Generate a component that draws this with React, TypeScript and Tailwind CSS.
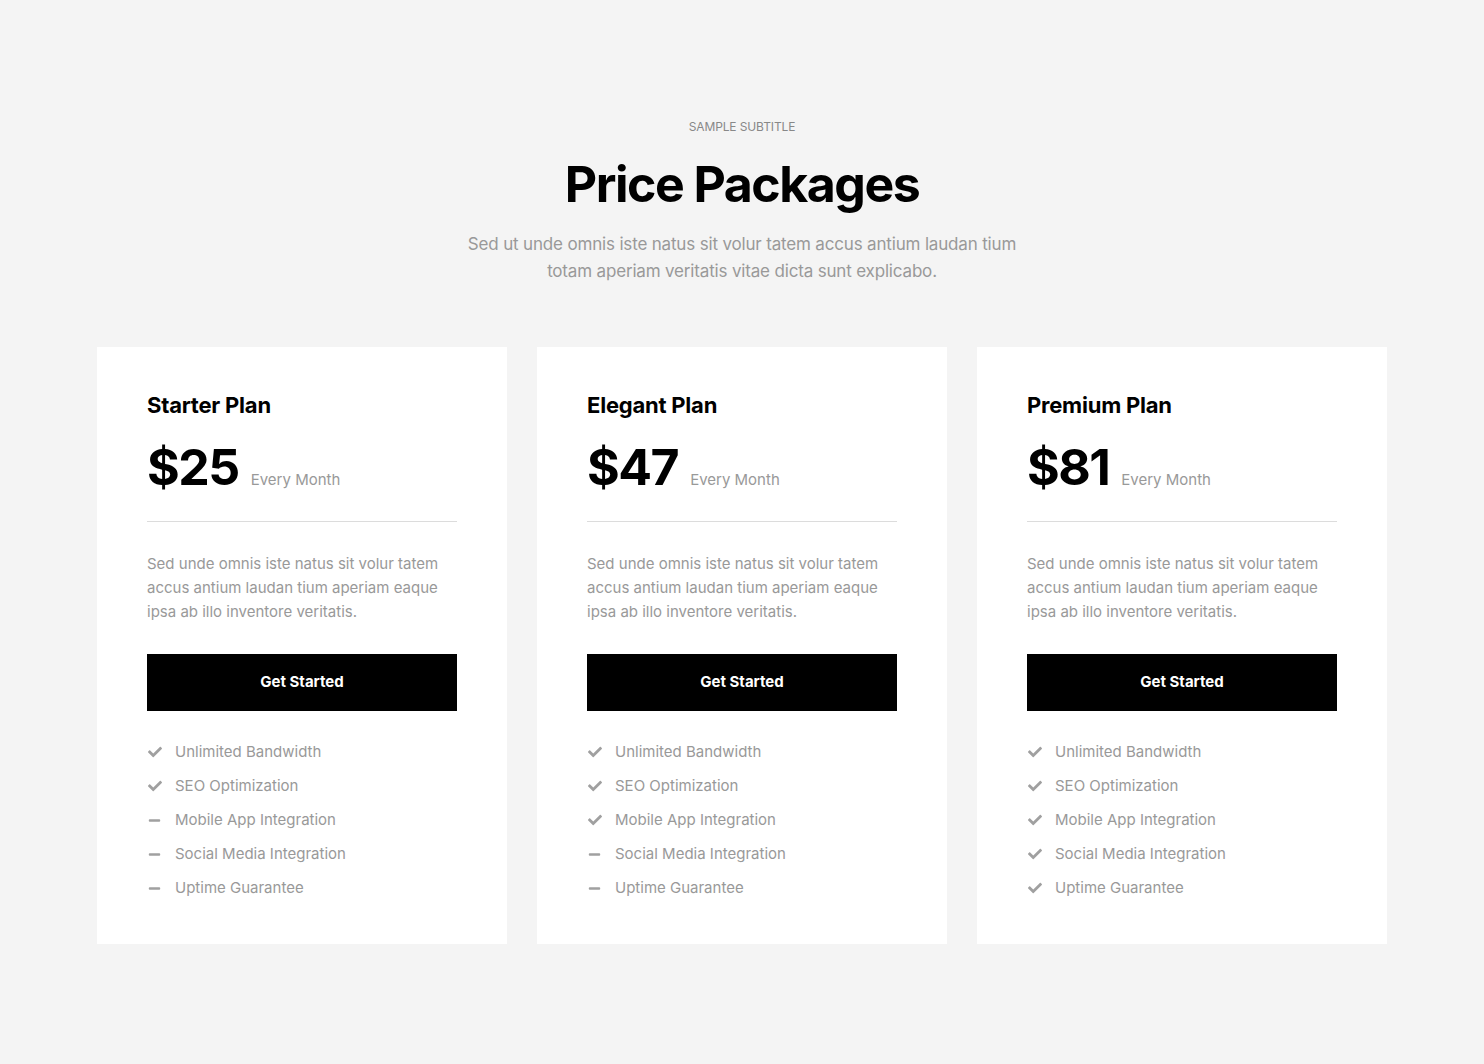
import { FaCheck, FaMinus } from "react-icons/fa";

const features = [
  "Unlimited Bandwidth",
  "SEO Optimization",
  "Mobile App Integration",
  "Social Media Integration",
  "Uptime Guarantee",
];

const plans = [
  { name: "Starter Plan", price: "$25", included: 2 },
  { name: "Elegant Plan", price: "$47", included: 3 },
  { name: "Premium Plan", price: "$81", included: 5 },
];

const PlanCard = ({ name, price, included }: { name: string; price: string; included: number }) => (
  <div className="bg-white px-[50px] pt-[43px] pb-[44px]">
    <h3 className="text-[22px] font-bold leading-[30px] text-black tracking-[-0.01em]">{name}</h3>
    <div className="mt-[19px] flex items-end gap-3 pb-[26px] border-b border-[#dcdcdc]">
      <span className="text-[50px] font-bold leading-[56px] text-black tracking-[-0.03em]">{price}</span>
      <span className="text-[15px] text-[#999] mb-[4px]">Every Month</span>
    </div>
    <p className="mt-[30px] text-[15px] leading-[24px] text-[#999]">
      Sed unde omnis iste natus sit volur tatem accus antium laudan tium aperiam eaque ipsa ab illo inventore veritatis.
    </p>
    <button className="mt-[30px] w-full h-[57px] bg-black text-white text-[15px] font-bold">
      Get Started
    </button>
    <ul className="mt-[29px] flex flex-col gap-[10px]">
      {features.map((f, i) => (
        <li key={f} className="flex items-center gap-[13px] text-[15px] leading-[24px] text-[#999]">
          <span className="w-[15px] flex justify-center text-[#a0a0a0]">
            {i < included ? <FaCheck size={14} /> : <FaMinus size={13} />}
          </span>
          {f}
        </li>
      ))}
    </ul>
  </div>
);

export default function App() {
  return (
    <div className="min-h-[1064px] bg-[#f4f4f4] pt-[119px] pb-[120px] font-['Inter',sans-serif]">
      <div className="text-center">
        <p className="text-[12px] leading-[16px] uppercase text-[#888] tracking-[-0.01em]">Sample Subtitle</p>
        <h1 className="mt-[17px] text-[50px] leading-[64px] font-bold text-black tracking-[-0.03em]">Price Packages</h1>
        <p className="mx-auto mt-[15px] w-[580px] text-[17px] leading-[27px] text-[#999] tracking-[-0.01em]">
          Sed ut unde omnis iste natus sit volur tatem accus antium laudan tium totam aperiam veritatis vitae dicta sunt explicabo.
        </p>
      </div>
      <div className="mx-auto mt-[62px] w-[1290px] grid grid-cols-3 gap-[30px]">
        {plans.map((p) => (
          <PlanCard key={p.name} {...p} />
        ))}
      </div>
    </div>
  );
}
